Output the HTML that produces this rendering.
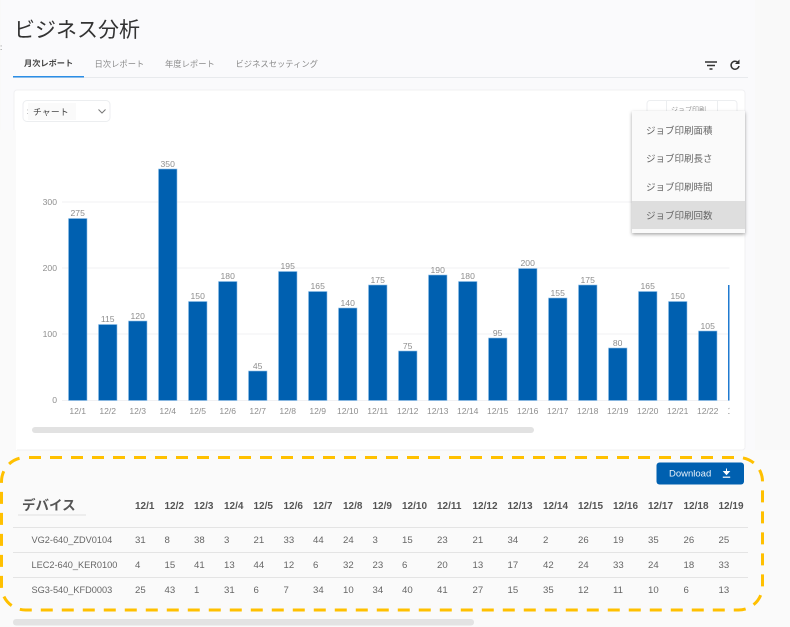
<!DOCTYPE html>
<html><head><meta charset="utf-8">
<style>
html,body{margin:0;padding:0;width:790px;height:627px;overflow:hidden;background:#f9f9f9}
svg{display:block}
text{font-family:"Liberation Sans","Noto Sans CJK JP",sans-serif}
.b{fill:#0060b0;stroke:#8fc0ea;stroke-width:.6}
.v{font-size:8.6px;fill:#8e8e8e;text-anchor:middle}
.x{font-size:8.6px;fill:#8e8e8e;text-anchor:middle}
.y{font-size:8.6px;fill:#8e8e8e;text-anchor:end}
.h{font-size:10px;font-weight:bold;fill:#555}
.c{font-size:9.6px;fill:#666}
.d{font-size:9.2px;fill:#666}
.m{font-size:9.5px;fill:#666}
.t{font-size:8.3px;fill:#8a8a8a}
</style></head><body>
<svg width="790" height="627" viewBox="0 0 790 627" xmlns="http://www.w3.org/2000/svg">
<rect width="790" height="627" fill="#f9f9f9"/>
<rect x="1" y="0" width="754" height="450" fill="#fafafc"/>
<rect x="0" y="130" width="16" height="320" fill="#fafafa"/>
<rect x="0" y="450" width="790" height="177" fill="#fafafa"/>
<text x="14" y="37" font-size="21" fill="#333">ビジネス分析</text>
<text x="0" y="50" font-size="8" fill="#666">:</text>
<text x="24" y="66" font-size="8.200" font-weight="bold" fill="#444">月次レポート</text>
<text x="94.500" y="67" class="t">日次レポート</text>
<text x="165" y="67" class="t">年度レポート</text>
<text x="235.500" y="67" class="t">ビジネスセッティング</text>
<rect x="13" y="77" width="735" height="1" fill="#e8eaed"/>
<rect x="13" y="76" width="71" height="1.500" fill="#2b8ee6"/>
<path d="M705 62h12M707 65.500h8M709.500 69h3" stroke="#333" stroke-width="1.400" fill="none"/>
<path d="M738 62.500a4 4 0 1 0 1 3.500" stroke="#333" stroke-width="1.500" fill="none"/>
<path d="M739.500 59.500v4.500h-4.500z" fill="#333"/>
<rect x="14" y="90" width="731" height="360" rx="3" fill="#fff" stroke="#f0f0f2" stroke-width="1"/>
<rect x="0" y="130" width="16" height="320" fill="#fafafa"/>
<rect x="16" y="130" width="1" height="320" fill="#fff"/>
<rect x="23" y="100.500" width="87" height="21" rx="4" fill="#fff" stroke="#eceef0"/>
<rect x="28" y="103" width="48" height="17" fill="#fafafa"/>
<text x="33" y="115" font-size="8.800" letter-spacing=".2" fill="#444">チャート</text>
<text x="26.500" y="114" font-size="8" fill="#aaa">:</text>
<path d="M98.500 109.500l3.500 3.500 3.500-3.500" stroke="#777" stroke-width="1" fill="none"/>
<rect x="647" y="100.500" width="90" height="20" rx="3" fill="#fff" stroke="#eceef0"/>
<path d="M666.500 100.500v20M717.500 100.500v20" stroke="#eceef0"/>
<text x="671" y="112" font-size="7" fill="#999">ジョブ印刷</text>
<g stroke="#f1f1f3" stroke-width="1">
<path d="M62 202h668M62 268h668M62 334h668M62 400.500h668"/>
</g>
<text x="57" y="205" class="y">300</text>
<text x="57" y="271" class="y">200</text>
<text x="57" y="337" class="y">100</text>
<text x="57" y="403" class="y">0</text>
<g>
<rect class="b" x="68.500" y="218.500" width="18.500" height="182"/><text class="v" x="77.700" y="216">275</text><text class="x" x="77.700" y="414">12/1</text>
<rect class="b" x="98.500" y="324.500" width="18.500" height="76"/><text class="v" x="107.700" y="322">115</text><text class="x" x="107.700" y="414">12/2</text>
<rect class="b" x="128.500" y="321" width="18.500" height="79.500"/><text class="v" x="137.700" y="319">120</text><text class="x" x="137.700" y="414">12/3</text>
<rect class="b" x="158.500" y="169" width="18.500" height="231.500"/><text class="v" x="167.700" y="167">350</text><text class="x" x="167.700" y="414">12/4</text>
<rect class="b" x="188.500" y="301.500" width="18.500" height="99"/><text class="v" x="197.700" y="299">150</text><text class="x" x="197.700" y="414">12/5</text>
<rect class="b" x="218.500" y="281.500" width="18.500" height="119"/><text class="v" x="227.700" y="279">180</text><text class="x" x="227.700" y="414">12/6</text>
<rect class="b" x="248.500" y="371" width="18.500" height="29.500"/><text class="v" x="257.700" y="369">45</text><text class="x" x="257.700" y="414">12/7</text>
<rect class="b" x="278.500" y="271.500" width="18.500" height="129"/><text class="v" x="287.700" y="269">195</text><text class="x" x="287.700" y="414">12/8</text>
<rect class="b" x="308.500" y="291.500" width="18.500" height="109"/><text class="v" x="317.700" y="289">165</text><text class="x" x="317.700" y="414">12/9</text>
<rect class="b" x="338.500" y="308" width="18.500" height="92.500"/><text class="v" x="347.700" y="306">140</text><text class="x" x="347.700" y="414">12/10</text>
<rect class="b" x="368.500" y="285" width="18.500" height="115.500"/><text class="v" x="377.700" y="283">175</text><text class="x" x="377.700" y="414">12/11</text>
<rect class="b" x="398.500" y="351" width="18.500" height="49.500"/><text class="v" x="407.700" y="349">75</text><text class="x" x="407.700" y="414">12/12</text>
<rect class="b" x="428.500" y="275" width="18.500" height="125.500"/><text class="v" x="437.700" y="273">190</text><text class="x" x="437.700" y="414">12/13</text>
<rect class="b" x="458.500" y="281.500" width="18.500" height="119"/><text class="v" x="467.700" y="279">180</text><text class="x" x="467.700" y="414">12/14</text>
<rect class="b" x="488.500" y="338" width="18.500" height="62.500"/><text class="v" x="497.700" y="336">95</text><text class="x" x="497.700" y="414">12/15</text>
<rect class="b" x="518.500" y="268.500" width="18.500" height="132"/><text class="v" x="527.700" y="266">200</text><text class="x" x="527.700" y="414">12/16</text>
<rect class="b" x="548.500" y="298" width="18.500" height="102.500"/><text class="v" x="557.700" y="296">155</text><text class="x" x="557.700" y="414">12/17</text>
<rect class="b" x="578.500" y="285" width="18.500" height="115.500"/><text class="v" x="587.700" y="283">175</text><text class="x" x="587.700" y="414">12/18</text>
<rect class="b" x="608.500" y="348" width="18.500" height="52.500"/><text class="v" x="617.700" y="346">80</text><text class="x" x="617.700" y="414">12/19</text>
<rect class="b" x="638.500" y="291.500" width="18.500" height="109"/><text class="v" x="647.700" y="289">165</text><text class="x" x="647.700" y="414">12/20</text>
<rect class="b" x="668.500" y="301.500" width="18.500" height="99"/><text class="v" x="677.700" y="299">150</text><text class="x" x="677.700" y="414">12/21</text>
<rect class="b" x="698.500" y="331" width="18.500" height="69.500"/><text class="v" x="707.700" y="329">105</text><text class="x" x="707.700" y="414">12/22</text>
<rect x="728" y="285" width="1.500" height="115.500" fill="#1f7ad0"/><text x="727.500" y="414" font-size="9" fill="#8e8e8e">1</text>
</g>
<rect x="729.500" y="130" width="15" height="318" fill="#fff"/>
<rect x="32" y="427" width="502" height="6" rx="3" fill="#e2e2e2"/>
<defs><filter id="s" x="-10%" y="-10%" width="120%" height="120%"><feDropShadow dx="0" dy="1.500" stdDeviation="1.800" flood-color="#000" flood-opacity=".35"/></filter></defs>
<rect x="632" y="111" width="113" height="122" fill="#fafafa" filter="url(#s)"/>
<rect x="632" y="201" width="113" height="28" fill="#dedede"/>
<text x="646" y="134" class="m">ジョブ印刷面積</text>
<text x="646" y="162" class="m">ジョブ印刷長さ</text>
<text x="646" y="190.500" class="m">ジョブ印刷時間</text>
<text x="646" y="219" class="m">ジョブ印刷回数</text>
<rect x="656.500" y="462.500" width="87.500" height="22" rx="3" fill="#0060b0"/>
<text x="669" y="476.500" font-size="9.500" fill="#e8f1fa">Download</text>
<path d="M726.500 468.500v3M723.800 471.500h5.400l-2.700 3z" stroke="#fff" stroke-width="1" fill="#fff"/>
<path d="M722.800 477.200h7.400" stroke="#fff" stroke-width="1.200"/>
<text x="22" y="510" font-size="13.500" font-weight="bold" fill="#555">デバイス</text>
<rect x="18" y="514.500" width="68" height="1" fill="#e0e0e0"/>
<g class="hd">
<text class="h" x="135" y="509">12/1</text><text class="h" x="164.500" y="509">12/2</text><text class="h" x="194" y="509">12/3</text><text class="h" x="224" y="509">12/4</text><text class="h" x="253.500" y="509">12/5</text><text class="h" x="283.500" y="509">12/6</text><text class="h" x="313" y="509">12/7</text><text class="h" x="343" y="509">12/8</text><text class="h" x="372.500" y="509">12/9</text><text class="h" x="402" y="509">12/10</text><text class="h" x="437" y="509">12/11</text><text class="h" x="472.500" y="509">12/12</text><text class="h" x="507.500" y="509">12/13</text><text class="h" x="543" y="509">12/14</text><text class="h" x="578" y="509">12/15</text><text class="h" x="613" y="509">12/16</text><text class="h" x="648" y="509">12/17</text><text class="h" x="683.500" y="509">12/18</text><text class="h" x="718.500" y="509">12/19</text>
</g>
<path d="M13 527.500h735M13 552.500h735M13 577.500h735" stroke="#e4e4e4" stroke-width="1"/>
<text class="d" x="31.500" y="543">VG2-640_ZDV0104</text>
<text class="c" x="135" y="543">31</text><text class="c" x="164.500" y="543">8</text><text class="c" x="194" y="543">38</text><text class="c" x="224" y="543">3</text><text class="c" x="253.500" y="543">21</text><text class="c" x="283.500" y="543">33</text><text class="c" x="313" y="543">44</text><text class="c" x="343" y="543">24</text><text class="c" x="372.500" y="543">3</text><text class="c" x="402" y="543">15</text><text class="c" x="437" y="543">23</text><text class="c" x="472.500" y="543">21</text><text class="c" x="507.500" y="543">34</text><text class="c" x="543" y="543">2</text><text class="c" x="578" y="543">26</text><text class="c" x="613" y="543">19</text><text class="c" x="648" y="543">35</text><text class="c" x="683.500" y="543">26</text><text class="c" x="718.500" y="543">25</text>
<text class="d" x="31.500" y="568">LEC2-640_KER0100</text>
<text class="c" x="135" y="568">4</text><text class="c" x="164.500" y="568">15</text><text class="c" x="194" y="568">41</text><text class="c" x="224" y="568">13</text><text class="c" x="253.500" y="568">44</text><text class="c" x="283.500" y="568">12</text><text class="c" x="313" y="568">6</text><text class="c" x="343" y="568">32</text><text class="c" x="372.500" y="568">23</text><text class="c" x="402" y="568">6</text><text class="c" x="437" y="568">20</text><text class="c" x="472.500" y="568">13</text><text class="c" x="507.500" y="568">17</text><text class="c" x="543" y="568">42</text><text class="c" x="578" y="568">24</text><text class="c" x="613" y="568">33</text><text class="c" x="648" y="568">24</text><text class="c" x="683.500" y="568">18</text><text class="c" x="718.500" y="568">33</text>
<text class="d" x="31.500" y="593">SG3-540_KFD0003</text>
<text class="c" x="135" y="593">25</text><text class="c" x="164.500" y="593">43</text><text class="c" x="194" y="593">1</text><text class="c" x="224" y="593">31</text><text class="c" x="253.500" y="593">6</text><text class="c" x="283.500" y="593">7</text><text class="c" x="313" y="593">34</text><text class="c" x="343" y="593">10</text><text class="c" x="372.500" y="593">34</text><text class="c" x="402" y="593">40</text><text class="c" x="437" y="593">41</text><text class="c" x="472.500" y="593">27</text><text class="c" x="507.500" y="593">15</text><text class="c" x="543" y="593">35</text><text class="c" x="578" y="593">12</text><text class="c" x="613" y="593">11</text><text class="c" x="648" y="593">10</text><text class="c" x="683.500" y="593">6</text><text class="c" x="718.500" y="593">13</text>
<rect x="1.500" y="457.500" width="761" height="152.500" rx="24" fill="none" stroke="#ffc000" stroke-width="3" stroke-dasharray="12 9" stroke-dashoffset="-3.500"/>
<rect x="13" y="619" width="461" height="6.500" rx="3" fill="#e3e3e3"/>
</svg>
</body></html>
